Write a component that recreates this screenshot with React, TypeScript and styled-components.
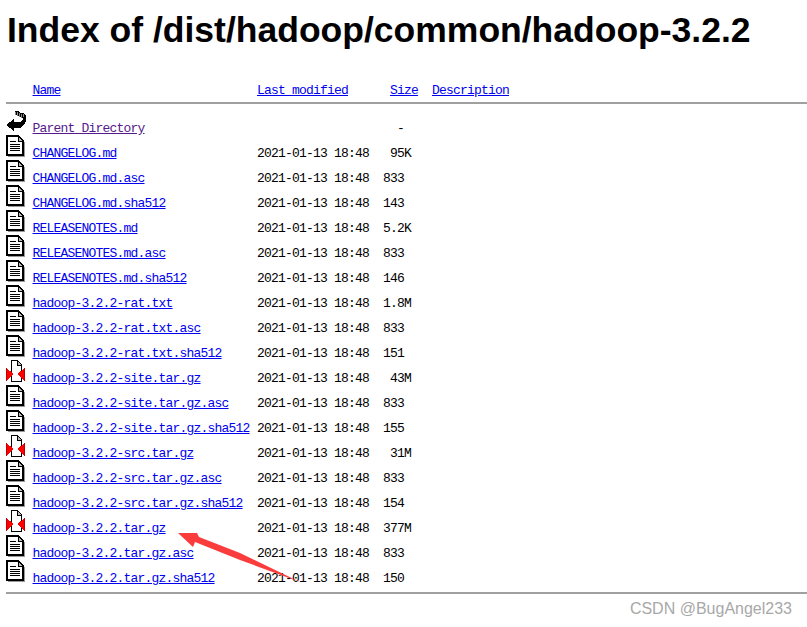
import React from 'react';
import styled, { createGlobalStyle } from 'styled-components';

const STAMP = '2021-01-13 18:48';

type Kind = 'doc' | 'zip';

type Entry = {
  name: string;
  size: string;
  kind: Kind;
};

const entries: Entry[] = [
  { name: 'CHANGELOG.md', size: ' 95K', kind: 'doc' },
  { name: 'CHANGELOG.md.asc', size: '833 ', kind: 'doc' },
  { name: 'CHANGELOG.md.sha512', size: '143 ', kind: 'doc' },
  { name: 'RELEASENOTES.md', size: '5.2K', kind: 'doc' },
  { name: 'RELEASENOTES.md.asc', size: '833 ', kind: 'doc' },
  { name: 'RELEASENOTES.md.sha512', size: '146 ', kind: 'doc' },
  { name: 'hadoop-3.2.2-rat.txt', size: '1.8M', kind: 'doc' },
  { name: 'hadoop-3.2.2-rat.txt.asc', size: '833 ', kind: 'doc' },
  { name: 'hadoop-3.2.2-rat.txt.sha512', size: '151 ', kind: 'doc' },
  { name: 'hadoop-3.2.2-site.tar.gz', size: ' 43M', kind: 'zip' },
  { name: 'hadoop-3.2.2-site.tar.gz.asc', size: '833 ', kind: 'doc' },
  { name: 'hadoop-3.2.2-site.tar.gz.sha512', size: '155 ', kind: 'doc' },
  { name: 'hadoop-3.2.2-src.tar.gz', size: ' 31M', kind: 'zip' },
  { name: 'hadoop-3.2.2-src.tar.gz.asc', size: '833 ', kind: 'doc' },
  { name: 'hadoop-3.2.2-src.tar.gz.sha512', size: '154 ', kind: 'doc' },
  { name: 'hadoop-3.2.2.tar.gz', size: '377M', kind: 'zip' },
  { name: 'hadoop-3.2.2.tar.gz.asc', size: '833 ', kind: 'doc' },
  { name: 'hadoop-3.2.2.tar.gz.sha512', size: '150 ', kind: 'doc' },
];

const BackIcon = () => (
  <IconSvg width="20" height="22" viewBox="0 0 20 22">
    <path d="M0 15L8 9v3h6l3-2V8l-3-1-4-2-1-4h3l3 2h3l2 3v5l-2 4-4 3H8v3z" fill="#000" />
    <path d="M9 2h1v3H9zM11 2h1v4h-1zM13 3h1v4h-1zM15 4h1v4h-1zM17 4h1v3h-1z" fill="#8a8a8a" />
  </IconSvg>
);

const DocIcon = () => (
  <IconSvg width="20" height="22" viewBox="0 0 20 22">
    <path d="M0 0h13l5 6v15H0z" fill="#000" />
    <path d="M2 2h10v5h4v12H2z" fill="#fff" />
    <path d="M13 2l3 4h-3z" fill="#bbb" />
    <path d="M18 7h1v15H2v-1h16z" fill="#999" />
    <path d="M4 6h6v1H4zM4 9h10v1H4zM4 11h10v1H4zM4 13h10v1H4zM4 15h10v1H4z" fill="#000" />
  </IconSvg>
);

const ZipIcon = () => (
  <IconSvg width="20" height="22" viewBox="0 0 20 22">
    <path d="M5 0h7l4 5v17H5z" fill="#000" />
    <path d="M6 1h5v5h4v15H6z" fill="#fff" />
    <path d="M12 2l3 3h-3z" fill="#bbb" />
    <path d="M0 8l8 6-8 7z" fill="#f00" />
    <path d="M19 8l-8 6 8 7z" fill="#f00" />
    <path d="M0 8h1v13H0zM18 8h1v13h-1z" fill="#b00" />
  </IconSvg>
);

const App = () => {
  return (
    <Page>
      <GlobalStyle />
      <Title>Index of /dist/hadoop/common/hadoop-3.2.2</Title>
      <HeadRow>
        <span />
        <a href="#name">Name</a>
        <a href="#modified">Last modified</a>
        <SizeCell>
          {' '}
          <a href="#size">Size</a>
        </SizeCell>
        <a href="#description">Description</a>
      </HeadRow>
      <Rule />
      <List>
        <Row>
          <BackIcon />
          <Visited href="#parent">Parent Directory</Visited>
          <span />
          <SizeCell>{'  - '}</SizeCell>
        </Row>
        {entries.map((entry) => (
          <Row key={entry.name}>
            {entry.kind === 'zip' ? <ZipIcon /> : <DocIcon />}
            <a href={`#${entry.name}`}>{entry.name}</a>
            <span>{STAMP}</span>
            <SizeCell>{entry.size}</SizeCell>
          </Row>
        ))}
      </List>
      <Rule />
      <Arrow width="807" height="627" viewBox="0 0 807 627">
        <path d="M178 533L197 533L199 537L240 553L300 582L240 560L195 542L193 547z" fill="#fb3c3c" />
      </Arrow>
      <Watermark>CSDN @BugAngel233</Watermark>
    </Page>
  );
};

export default App;

const GlobalStyle = createGlobalStyle`
  html, body {
    margin: 0;
    background: #fff;
  }

  a {
    color: #0000ee;
  }
`;

const Page = styled.div`
  position: relative;
  width: 807px;
  height: 627px;
  overflow: hidden;
  padding-left: 6px;
  box-sizing: border-box;
  font-family: 'Liberation Mono', monospace;
  font-size: 13px;
  letter-spacing: -0.8px;
  color: #000;
`;

const Title = styled.h1`
  margin: 0;
  padding: 10px 0 0 1px;
  height: 68px;
  box-sizing: border-box;
  font-family: 'Liberation Sans', Arial, sans-serif;
  font-size: 35.5px;
  line-height: 40px;
  font-weight: 700;
  letter-spacing: 0;
`;

const columns = '26.5px 224.5px 126px 49px 1fr';

const HeadRow = styled.div`
  display: grid;
  grid-template-columns: ${columns};
  height: 34px;
  align-items: end;
  padding-bottom: 5px;
  box-sizing: border-box;
  line-height: 12px;
`;

const Rule = styled.hr`
  margin: 0;
  border: 0;
  height: 1px;
  border-top: 1px solid #a0a0a0;
  background: #a0a0a0;
`;

const List = styled.div`
  padding-top: 6px;
  height: 488px;
  box-sizing: border-box;
`;

const Row = styled.div`
  display: grid;
  grid-template-columns: ${columns};
  height: 25px;
  align-items: end;
  box-sizing: border-box;
  line-height: 12px;
`;

const SizeCell = styled.span`
  white-space: pre;
`;

const Visited = styled.a`
  color: #551a8b;
`;

const IconSvg = styled.svg`
  display: block;
  margin-bottom: 3px;
  shape-rendering: crispEdges;
`;

const Arrow = styled.svg`
  position: absolute;
  top: 0;
  left: 0;
  pointer-events: none;
`;

const Watermark = styled.div`
  position: absolute;
  right: 15px;
  top: 599px;
  font-family: 'Liberation Sans', Arial, sans-serif;
  font-size: 16px;
  line-height: 20px;
  letter-spacing: 0;
  color: #a8a8a8;
`;
